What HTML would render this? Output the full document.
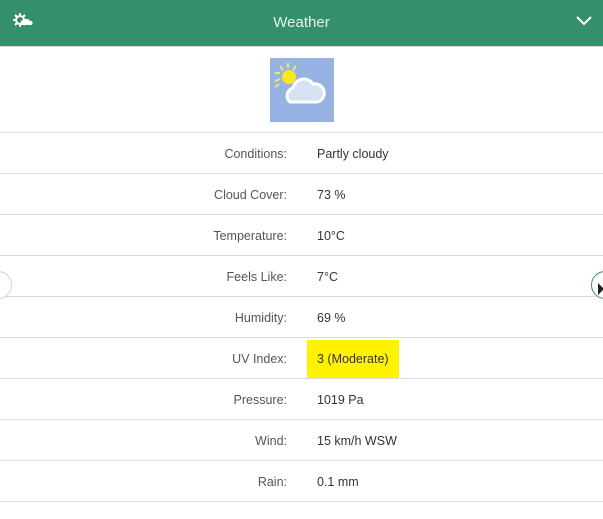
<html><head><style>
body{margin:0;width:603px;height:518px;background:#fff;font-family:"Liberation Sans",sans-serif;overflow:hidden;position:relative}
.hdr{position:absolute;left:0;top:0;width:603px;height:46px;background:#34906a;border-bottom:1px solid #ddd}
.hdr .t{position:absolute;left:0;right:0;top:14px;text-align:center;color:#e8f3ee;font-size:15px}
.row{position:absolute;left:0;width:603px;height:40px;border-top:1px solid #ddd;font-size:12.5px}
.l{position:absolute;right:316px;top:14px;color:#555}
.v{position:absolute;left:317px;top:14px;color:#333}
</style></head><body>
<div class="hdr">
<svg style="position:absolute;left:12px;top:12px" width="22" height="18" viewBox="0 0 22 18"><circle cx="8" cy="8" r="5" fill="#fff"/><g stroke="#fff" stroke-width="2"><path d="M8 1v14M1 8h14M3 3l10 10M13 3L3 13"/></g><circle cx="8" cy="8" r="3" fill="#34906a"/><path d="M9 12a3 3 0 0 1 4-4a3 3 0 0 1 5 1a2 2 0 0 1 1 4H9z" fill="#fff"/></svg>
<div class="t">Weather</div>
<svg style="position:absolute;left:576px;top:16px" width="16" height="10"><path d="M1 1l7 7 7-7" stroke="#fff" stroke-width="2" fill="none"/></svg>
</div>
<svg style="position:absolute;left:270px;top:58px" width="64" height="64"><rect width="64" height="64" fill="#96b3e4"/><g stroke="#f0e86a" stroke-width="2"><path d="M18 5v5M10 8l3 4M26 8l-3 4M5 15h5M5 23l5-2M5 29l4-3"/></g><circle cx="19" cy="19" r="7" fill="#f7e81a"/><path d="M20 44a8 8 0 0 1 3-14a11 11 0 0 1 20-4a9 9 0 0 1 4 18z" fill="#d6e2f4" stroke="#fff" stroke-width="3"/></svg>
<div class="row" style="top:132px"><span class="l">Conditions:</span><span class="v">Partly cloudy</span></div>
<div class="row" style="top:173px"><span class="l">Cloud Cover:</span><span class="v">73 %</span></div>
<div class="row" style="top:214px"><span class="l">Temperature:</span><span class="v">10°C</span></div>
<div class="row" style="top:255px"><span class="l">Feels Like:</span><span class="v">7°C</span></div>
<div class="row" style="top:296px"><span class="l">Humidity:</span><span class="v">69 %</span></div>
<div class="row" style="top:337px"><div style="position:absolute;left:307px;top:2px;width:92px;height:38px;background:#fff200"></div><span class="l">UV Index:</span><span class="v">3 (Moderate)</span></div>
<div class="row" style="top:378px"><span class="l">Pressure:</span><span class="v">1019 Pa</span></div>
<div class="row" style="top:419px"><span class="l">Wind:</span><span class="v">15 km/h WSW</span></div>
<div class="row" style="top:460px"><span class="l">Rain:</span><span class="v">0.1 mm</span></div>
<div class="row" style="top:501px;height:17px"></div>
<div style="position:absolute;left:-16px;top:271px;width:26px;height:26px;border:1px solid #bcdccf;border-radius:50%;background:#fff"></div>
<div style="position:absolute;left:591px;top:271px;width:26px;height:26px;border:1px solid #34906a;border-radius:50%;background:#fff"></div>
<div style="position:absolute;left:598px;top:283px;width:0;height:0;border-left:6px solid #222;border-top:6px solid transparent;border-bottom:6px solid transparent"></div>
</body></html>
